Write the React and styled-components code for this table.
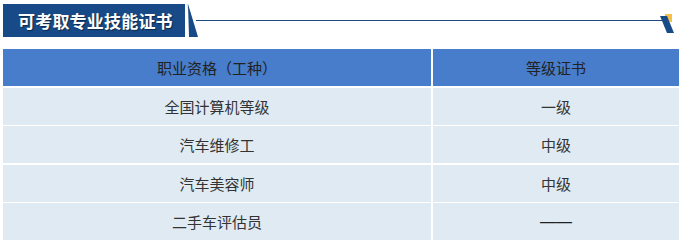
import React from 'react';
import styled, { createGlobalStyle } from 'styled-components';

const GlobalStyle = createGlobalStyle`
  body {
    margin: 0;
    background: #fff;
    font-family: "Noto Sans CJK SC", "Noto Sans", sans-serif;
  }
`;

const rows = [
  ['全国计算机等级', '一级'],
  ['汽车维修工', '中级'],
  ['汽车美容师', '中级'],
  ['二手车评估员', '——'],
];

function App() {
  return (
    <Page>
      <GlobalStyle />
      <TitleBar>
        <Banner>可考取专业技能证书</Banner>
        <Slant width="12" height="33" viewBox="0 0 12 33">
          <polygon points="0,0 2,0 12,33 10,33" fill="#dbe6f2" />
          <polygon points="2,0 12,33 3,33" fill="#184a87" />
        </Slant>
        <Rule />
        <Mark width="18" height="22" viewBox="0 0 18 22">
          <rect x="7" y="3" width="7" height="8" fill="#f5c04a" />
          <polygon points="2,5 9,5 16,22 9,22" fill="#184a87" />
        </Mark>
      </TitleBar>
      <Table>
        <HeadCell>职业资格（工种）</HeadCell>
        <HeadCell>等级证书</HeadCell>
        {rows.map(([name, level]) => (
          <React.Fragment key={name}>
            <Cell>{name}</Cell>
            <Cell>{level === '——' ? <Dash>{level}</Dash> : level}</Cell>
          </React.Fragment>
        ))}
      </Table>
    </Page>
  );
}

const Page = styled.div`
  width: 682px;
  padding: 4px 3px 0 3px;
  box-sizing: border-box;
`;

const TitleBar = styled.div`
  display: flex;
  align-items: center;
  height: 33px;
`;

const Banner = styled.div`
  width: 182px;
  height: 33px;
  box-sizing: border-box;
  padding-left: 15px;
  background: #184a87;
  color: #fff;
  font-size: 17px;
  font-weight: bold;
  line-height: 33px;
  letter-spacing: 0.2px;
  text-shadow: 1px 1px 1px rgba(0, 0, 0, 0.45);
  white-space: nowrap;
`;

const Slant = styled.svg`
  display: block;
  flex: none;
  margin-left: 1px;
`;

const Rule = styled.div`
  flex: 1;
  height: 1px;
  background: #1d4a82;
  margin-left: -2px;
  margin-right: -9px;
`;

const Mark = styled.svg`
  display: block;
  flex: none;
  margin-right: 3px;
  margin-top: 2px;
`;

const Table = styled.div`
  display: grid;
  grid-template-columns: 428px 1fr;
  grid-auto-rows: 37px;
  column-gap: 2px;
  row-gap: 1.5px;
  margin-top: 12px;
  width: 676px;
`;

const HeadCell = styled.div`
  display: flex;
  align-items: center;
  justify-content: center;
  background: #477dca;
  color: #222;
  font-size: 15px;
`;

const Cell = styled.div`
  display: flex;
  align-items: center;
  justify-content: center;
  background: #dfeaf2;
  color: #333;
  font-size: 15px;
`;

const Dash = styled.span`
  font-family: "Liberation Sans", sans-serif;
  font-size: 16px;
  color: #222;
`;

export default App;
